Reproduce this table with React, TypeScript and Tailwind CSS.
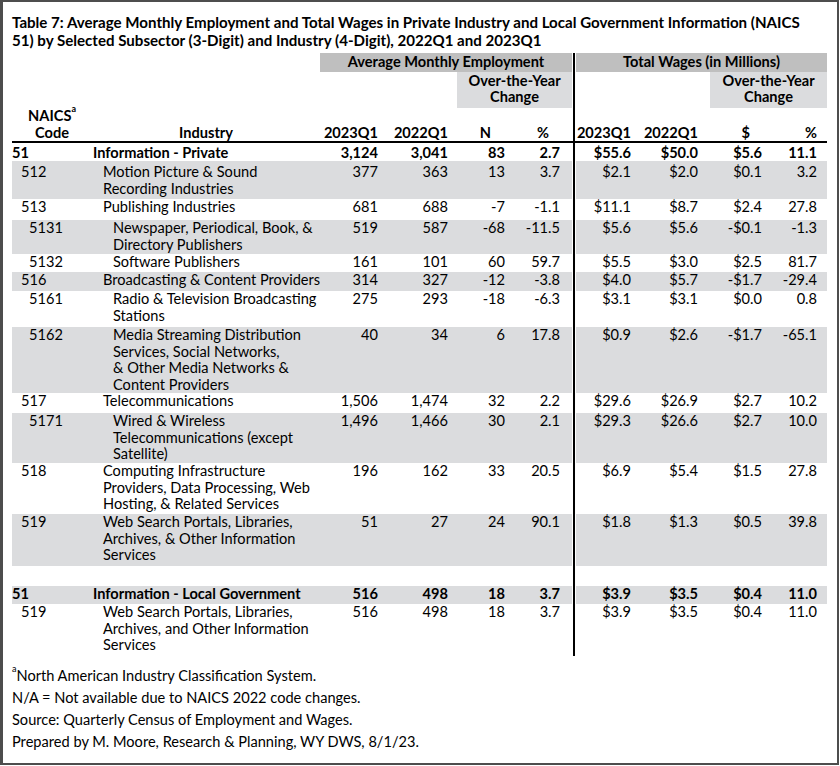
const cols = "grid grid-cols-[80px_228px_60px_77px_51px_64px_4px_60px_74px_56px_61px]";

const numPad = ["pr-[2px]", "pr-[9px]", "pr-[3px]", "pr-[12px]", "pr-[5px]", "pr-[12px]", "pr-[4px]", "pr-[10px]"];
const codePad = ["pl-0", "pl-[9px]", "pl-[17px]"];
const indPad = ["pl-[1px]", "pl-[11px]", "pl-[21px]"];

type Row = {
  code: string;
  lvl: number;
  ind: string[];
  v: string[];
  gray?: boolean;
  bold?: boolean;
  h: string;
  pt?: string;
};

const rows: Row[] = [
  { code: "51", lvl: 0, ind: ["Information - Private"], v: ["3,124", "3,041", "83", "2.7", "$55.6", "$50.0", "$5.6", "11.1"], bold: true, h: "h-[18px]", pt: "pt-[2px]" },
  { code: "512", lvl: 1, ind: ["Motion Picture & Sound", "Recording Industries"], v: ["377", "363", "13", "3.7", "$2.1", "$2.0", "$0.1", "3.2"], gray: true, h: "h-[38px]", pt: "pt-[3px]" },
  { code: "513", lvl: 1, ind: ["Publishing Industries"], v: ["681", "688", "-7", "-1.1", "$11.1", "$8.7", "$2.4", "27.8"], h: "h-[21px]" },
  { code: "5131", lvl: 2, ind: ["Newspaper, Periodical, Book, &", "Directory Publishers"], v: ["519", "587", "-68", "-11.5", "$5.6", "$5.6", "-$0.1", "-1.3"], gray: true, h: "h-[34px]" },
  { code: "5132", lvl: 2, ind: ["Software Publishers"], v: ["161", "101", "60", "59.7", "$5.5", "$3.0", "$2.5", "81.7"], h: "h-[18px]" },
  { code: "516", lvl: 1, ind: ["Broadcasting & Content Providers"], v: ["314", "327", "-12", "-3.8", "$4.0", "$5.7", "-$1.7", "-29.4"], gray: true, h: "h-[19px]" },
  { code: "5161", lvl: 2, ind: ["Radio & Television Broadcasting", "Stations"], v: ["275", "293", "-18", "-6.3", "$3.1", "$3.1", "$0.0", "0.8"], h: "h-[36px]" },
  { code: "5162", lvl: 2, ind: ["Media Streaming Distribution", "Services, Social Networks,", "& Other Media Networks &", "Content Providers"], v: ["40", "34", "6", "17.8", "$0.9", "$2.6", "-$1.7", "-65.1"], gray: true, h: "h-[66px]" },
  { code: "517", lvl: 1, ind: ["Telecommunications"], v: ["1,506", "1,474", "32", "2.2", "$29.6", "$26.9", "$2.7", "10.2"], h: "h-[20px]" },
  { code: "5171", lvl: 2, ind: ["Wired & Wireless", "Telecommunications (except", "Satellite)"], v: ["1,496", "1,466", "30", "2.1", "$29.3", "$26.6", "$2.7", "10.0"], gray: true, h: "h-[50px]" },
  { code: "518", lvl: 1, ind: ["Computing Infrastructure", "Providers, Data Processing, Web", "Hosting, & Related Services"], v: ["196", "162", "33", "20.5", "$6.9", "$5.4", "$1.5", "27.8"], h: "h-[51px]" },
  { code: "519", lvl: 1, ind: ["Web Search Portals, Libraries,", "Archives, & Other Information", "Services"], v: ["51", "27", "24", "90.1", "$1.8", "$1.3", "$0.5", "39.8"], gray: true, h: "h-[52px]" },
];

const govRows: Row[] = [
  { code: "51", lvl: 0, ind: ["Information - Local Government"], v: ["516", "498", "18", "3.7", "$3.9", "$3.5", "$0.4", "11.0"], bold: true, gray: true, h: "h-[18px]" },
  { code: "519", lvl: 1, ind: ["Web Search Portals, Libraries,", "Archives, and Other Information", "Services"], v: ["516", "498", "18", "3.7", "$3.9", "$3.5", "$0.4", "11.0"], h: "h-[52px]" },
];

function Divider() {
  return (
    <div className="flex justify-center bg-white">
      <div className="w-[2px] bg-black" />
    </div>
  );
}

function DataRow({ r }: { r: Row }) {
  const bg = r.gray ? "bg-[#dbdcde]" : "bg-white";
  const pt = r.pt ?? "";
  const cells = r.v.map((val, i) => (
    <div key={i} className={`${bg} ${pt} text-right ${numPad[i]}`}>
      {val}
    </div>
  ));
  return (
    <div className={`${cols} ${r.h} ${r.bold ? "font-bold" : ""}`}>
      <div className={`${bg} ${pt} ${codePad[r.lvl]}`}>{r.code}</div>
      <div className={`${bg} ${pt} ${indPad[r.lvl]}`}>
        {r.ind.map((l, i) => (
          <div key={i} className="whitespace-nowrap">
            {l}
          </div>
        ))}
      </div>
      {cells.slice(0, 4)}
      <Divider />
      {cells.slice(4)}
    </div>
  );
}

export default function App() {
  return (
    <div className="w-[840px] h-[766px] bg-white text-black font-['Lato',sans-serif]">
      <div className="w-[839px] h-[765px] border-2 border-l-[3px] border-[#4d4d4d] pt-[11px] pl-[9px]">
        <h1 className="font-bold text-[15.1px] leading-[18px] whitespace-nowrap">
          Table 7: Average Monthly Employment and Total Wages in Private Industry and Local Government Information (NAICS
          <br />
          51) by Selected Subsector (3-Digit) and Industry (4-Digit), 2022Q1 and 2023Q1
        </h1>

        <div className="mt-[4px] w-[815px] text-[14.6px] leading-[16.5px]">
          {/* band row */}
          <div className={`${cols} h-[19px] font-bold`}>
            <div className="col-span-2" />
            <div className="col-span-4 bg-[#bfbfbf] flex items-center justify-center">Average Monthly Employment</div>
            <Divider />
            <div className="col-span-4 bg-[#bfbfbf] flex items-center justify-center">Total Wages (in Millions)</div>
          </div>
          {/* change row */}
          <div className={`${cols} h-[36px] font-bold`}>
            <div className="col-span-4" />
            <div className="col-span-2 bg-[#dbdcde] text-center pt-[1px] leading-[16px]">
              <div>Over-the-Year</div>
              <div>Change</div>
            </div>
            <Divider />
            <div className="col-span-2" />
            <div className="col-span-2 bg-[#dbdcde] text-center pt-[1px] leading-[16px]">
              <div>Over-the-Year</div>
              <div>Change</div>
            </div>
          </div>
          {/* column labels */}
          <div className={`${cols} h-[33px] font-bold items-end pb-[1px]`}>
            <div className="text-center">
              <div>
                NAICS<sup className="text-[9px] align-[5px]">a</sup>
              </div>
              <div>Code</div>
            </div>
            <div className="text-center">Industry</div>
            <div className="text-right pr-[2px]">2023Q1</div>
            <div className="text-right pr-[9px]">2022Q1</div>
            <div className="text-right pr-[17px]">N</div>
            <div className="text-right pr-[23px]">%</div>
            <div className="self-stretch flex justify-center">
              <div className="w-[2px] bg-black" />
            </div>
            <div className="text-right pr-[5px]">2023Q1</div>
            <div className="text-right pr-[12px]">2022Q1</div>
            <div className="text-right pr-[16px]">$</div>
            <div className="text-right pr-[10px]">%</div>
          </div>
          <div className="h-[2px] bg-black" />

          {rows.map((r, i) => (
            <DataRow key={i} r={r} />
          ))}
          <div className={`${cols} h-[20px]`}>
            <div className="col-span-6" />
            <Divider />
          </div>
          {govRows.map((r, i) => (
            <DataRow key={i} r={r} />
          ))}
        </div>

        <div className="mt-[9px] text-[14.6px] leading-[22px]">
          <div>
            <sup className="text-[9px] align-[5px]">a</sup>North American Industry Classification System.
          </div>
          <div>N/A = Not available due to NAICS 2022 code changes.</div>
          <div>Source: Quarterly Census of Employment and Wages.</div>
          <div>Prepared by M. Moore, Research &amp; Planning, WY DWS, 8/1/23.</div>
        </div>
      </div>
    </div>
  );
}
